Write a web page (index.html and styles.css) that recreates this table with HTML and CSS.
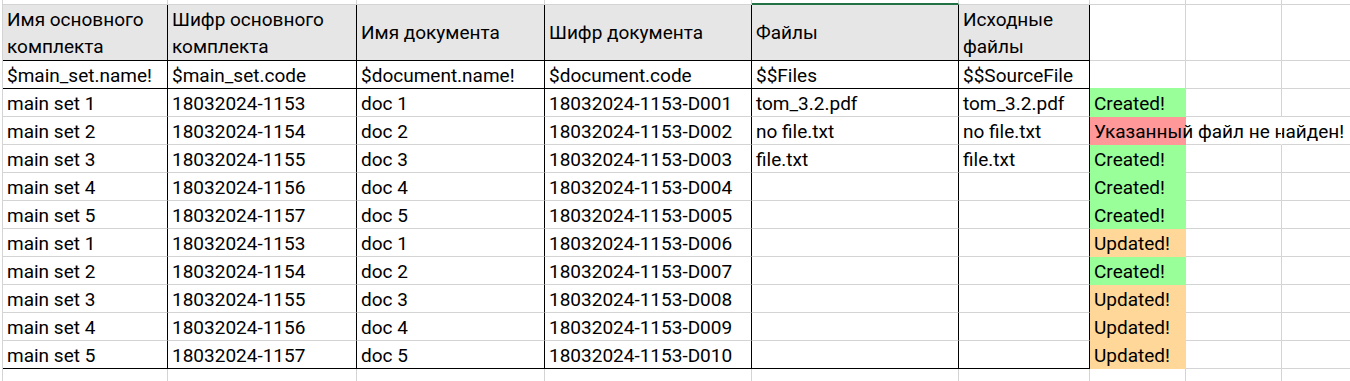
FILE: index.html
```html
<!DOCTYPE html>
<html lang="ru">
<head>
<meta charset="utf-8">
<title>Sheet</title>
<link rel="stylesheet" href="styles.css">
</head>
<body>
<div class="sheet">
  <div class="c top"></div><div class="c top"></div><div class="c top"></div><div class="c top"></div><div class="c top sel"></div><div class="c top"></div><div class="c top"></div><div class="c top"></div><div class="c top"></div>

  <div class="c hd k bk">Имя основного<br>комплекта</div>
  <div class="c hd k bk">Шифр основного<br>комплекта</div>
  <div class="c hd k bk">Имя документа</div>
  <div class="c hd k bk">Шифр документа</div>
  <div class="c hd k bk">Файлы</div>
  <div class="c hd k bk">Исходные<br>файлы</div>
  <div class="c"></div><div class="c"></div><div class="c"></div>

  <div class="c k bk">$main_set.name!</div>
  <div class="c k bk">$main_set.code</div>
  <div class="c k bk">$document.name!</div>
  <div class="c k bk">$document.code</div>
  <div class="c k bk">$$Files</div>
  <div class="c k bk">$$SourceFile</div>
  <div class="c b-ok"></div><div class="c"></div><div class="c"></div>

  <div class="c k">main set 1</div><div class="c k">18032024-1153</div><div class="c k">doc 1</div><div class="c k">18032024-1153-D001</div><div class="c k">tom_3.2.pdf</div><div class="c k">tom_3.2.pdf</div><div class="c ok">Created!</div><div class="c"></div><div class="c"></div>

  <div class="c k">main set 2</div><div class="c k">18032024-1154</div><div class="c k">doc 2</div><div class="c k">18032024-1153-D002</div><div class="c k">no file.txt</div><div class="c k">no file.txt</div><div class="c err">Указанный файл не найден!</div><div class="c spill"></div><div class="c"></div>

  <div class="c k">main set 3</div><div class="c k">18032024-1155</div><div class="c k">doc 3</div><div class="c k">18032024-1153-D003</div><div class="c k">file.txt</div><div class="c k">file.txt</div><div class="c ok">Created!</div><div class="c"></div><div class="c"></div>

  <div class="c k">main set 4</div><div class="c k">18032024-1156</div><div class="c k">doc 4</div><div class="c k">18032024-1153-D004</div><div class="c k"></div><div class="c k"></div><div class="c ok">Created!</div><div class="c"></div><div class="c"></div>

  <div class="c k">main set 5</div><div class="c k">18032024-1157</div><div class="c k">doc 5</div><div class="c k">18032024-1153-D005</div><div class="c k"></div><div class="c k"></div><div class="c ok">Created!</div><div class="c"></div><div class="c"></div>

  <div class="c k">main set 1</div><div class="c k">18032024-1153</div><div class="c k">doc 1</div><div class="c k">18032024-1153-D006</div><div class="c k"></div><div class="c k"></div><div class="c upd">Updated!</div><div class="c"></div><div class="c"></div>

  <div class="c k">main set 2</div><div class="c k">18032024-1154</div><div class="c k">doc 2</div><div class="c k">18032024-1153-D007</div><div class="c k"></div><div class="c k"></div><div class="c ok">Created!</div><div class="c"></div><div class="c"></div>

  <div class="c k">main set 3</div><div class="c k">18032024-1155</div><div class="c k">doc 3</div><div class="c k">18032024-1153-D008</div><div class="c k"></div><div class="c k"></div><div class="c upd">Updated!</div><div class="c"></div><div class="c"></div>

  <div class="c k">main set 4</div><div class="c k">18032024-1156</div><div class="c k">doc 4</div><div class="c k">18032024-1153-D009</div><div class="c k"></div><div class="c k"></div><div class="c upd">Updated!</div><div class="c"></div><div class="c"></div>

  <div class="c k bk">main set 5</div><div class="c k bk">18032024-1157</div><div class="c k bk">doc 5</div><div class="c k bk">18032024-1153-D010</div><div class="c k bk"></div><div class="c k bk"></div><div class="c upd">Updated!</div><div class="c"></div><div class="c"></div>

  <div class="c"></div><div class="c"></div><div class="c"></div><div class="c"></div><div class="c"></div><div class="c"></div><div class="c"></div><div class="c"></div><div class="c"></div>
</div>
</body>
</html>
```

FILE: styles.css
```css
html, body {
  margin: 0;
  padding: 0;
  background: #ffffff;
}

body {
  font-family: Roboto, "Liberation Sans", sans-serif;
  font-size: 19px;
  color: #000000;
  overflow: hidden;
}

.sheet {
  display: grid;
  grid-template-columns: 165px 189px 188px 207px 207px 131px 96px 96px 96px;
  grid-template-rows: 5px 56px repeat(12, 28px);
  width: max-content;
  margin-left: 2px;
  border-left: 1px solid #d4d4d4;
}

.c {
  display: flex;
  align-items: center;
  min-width: 0;
  padding: 1px 4px 0 4px;
  border-right: 1px solid #d4d4d4;
  border-bottom: 1px solid #d4d4d4;
  line-height: 27px;
  white-space: nowrap;
  overflow: visible;
}

.top {
  padding: 0;
}

.sel {
  border-bottom: 2px solid #217346;
}

.hd {
  background: #e7e6e6;
  white-space: normal;
  padding-top: 0;
  line-height: 27px;
}

.k {
  border-right-color: #000000;
}

.bk {
  border-bottom-color: #000000;
}

.b-ok {
  border-bottom-color: #99ff99;
}

.ok {
  background: #99ff99;
  border-right-color: #99ff99;
  border-bottom-color: #99ff99;
}

.err {
  background: #ff9999;
  border-right-color: #ff9999;
  border-bottom-color: #ff9999;
}

.upd {
  background: #ffd899;
  border-right-color: #ffd899;
  border-bottom-color: #ffd899;
}

.spill {
  border-right-color: #ffffff;
}
```
